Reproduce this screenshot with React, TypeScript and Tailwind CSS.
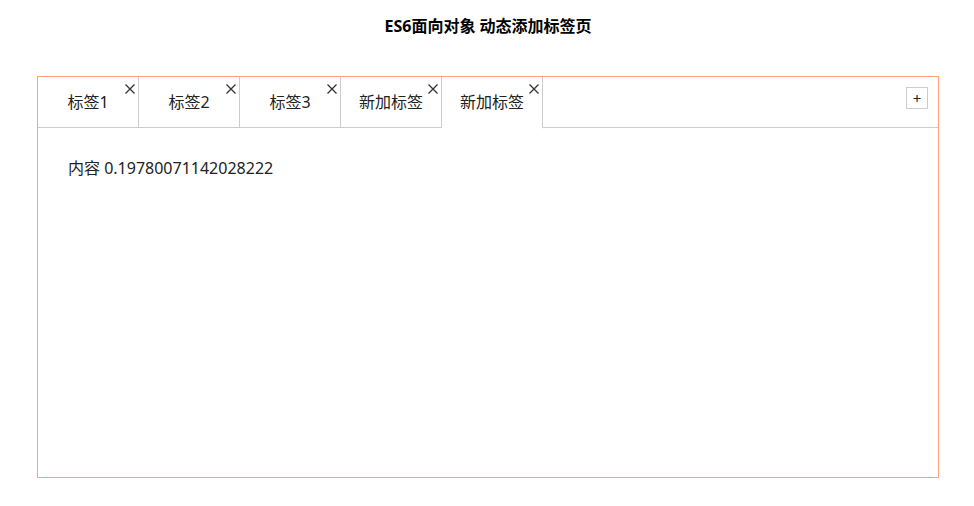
import React from "react";

const tabs = [
  { label: "标签1", active: false },
  { label: "标签2", active: false },
  { label: "标签3", active: false },
  { label: "新加标签", active: false },
  { label: "新加标签", active: true },
];

function CloseIcon() {
  return (
    <svg
      className="absolute top-[7px] right-[3px] w-[10px] h-[10px]"
      viewBox="0 0 10 10"
      fill="none"
      stroke="#333"
      strokeWidth="1.3"
    >
      <path d="M0.5 0.5 L9.5 9.5 M9.5 0.5 L0.5 9.5" />
    </svg>
  );
}

export default function App() {
  return (
    <div
      className="w-full min-h-[506px] bg-white pl-[2px] text-[#222]"
      style={{ fontFamily: '"Noto Sans", "Noto Sans CJK SC", sans-serif' }}
    >
      <h4 className="pt-[16px] text-center text-[16px] font-bold leading-[20px] text-black">
        ES6面向对象 动态添加标签页
      </h4>
      <div className="mx-auto mt-[40px] h-[402px] w-[902px] border border-[#ffa07a]">
        <nav className="flex h-[50px] items-start">
          {tabs.map((t, i) => (
            <div
              key={i}
              className={
                t.active
                  ? "relative z-10 h-[52px] w-[101px] shrink-0 border-r border-b-2 border-r-[#ccc] border-b-white bg-white text-center text-[16px] leading-[50px]"
                  : "relative h-[50px] w-[101px] shrink-0 border-r border-[#ccc] text-center text-[16px] leading-[50px]"
              }
            >
              <span>{t.label}</span>
              <CloseIcon />
            </div>
          ))}
          <div className="ml-auto mr-[10px] mt-[10px] flex h-[22px] w-[22px] items-center justify-center border border-[#ccc] text-[15px] leading-[20px] select-none">
            +
          </div>
        </nav>
        <section className="h-[300px] border-t border-[#ccc] p-[30px] text-[16px] leading-[21px]">
          内容 0.19780071142028222
        </section>
      </div>
    </div>
  );
}
